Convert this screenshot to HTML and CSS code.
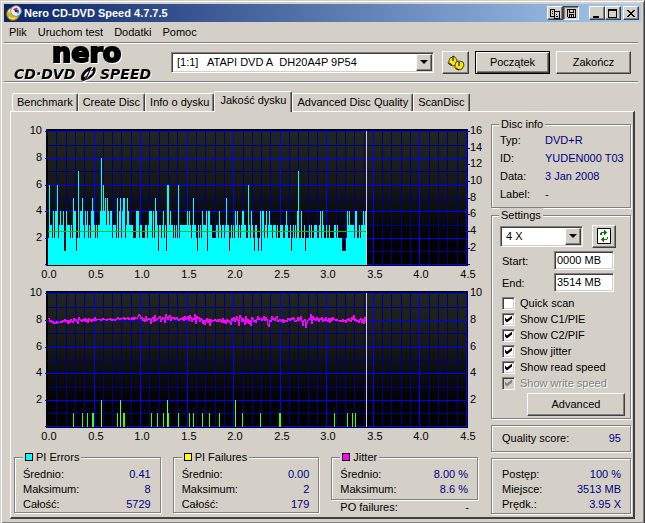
FILE: index.html
```html
<!DOCTYPE html>
<html lang="pl">
<head>
<meta charset="utf-8">
<title>Nero CD-DVD Speed 4.7.7.5</title>
<link rel="stylesheet" href="styles.css">
</head>
<body>
<div class="window">
  <header class="titlebar">
    <svg class="app-icon" viewBox="0 0 16 16" aria-hidden="true">
      <circle cx="7" cy="9" r="6.5" fill="#d8b820" stroke="#7a6410"/>
      <path d="M2 7a6 6 0 0 1 4-4l1 5z" fill="#fff6a0"/>
      <circle cx="10" cy="6" r="5.3" fill="#e8eef4" stroke="#8090a0"/>
      <path d="M7 5a4 4 0 0 1 5-2l-2 3z" fill="#e03020"/>
      <path d="M12 4a4 4 0 0 1 0 5l-2-3z" fill="#2060d0"/>
      <circle cx="10" cy="6" r="1.3" fill="#203040"/>
      <path d="M3 12a5 5 0 0 0 6 1" fill="none" stroke="#fff6a0"/>
    </svg>
    <h1 class="title">Nero CD-DVD Speed 4.7.7.5</h1>
    <div class="caption-group">
      <button class="caption" aria-label="Kopiuj"><svg viewBox="0 0 12 11"><path d="M1 1h5v2h4l1 1v7h-6v-2h-4zM2 2v6h3v-6zM6 4v6h4v-6z" fill-rule="evenodd"/><path d="M3 3h1v1h-1zM3 5h1v1h-1zM7 6h1v1h-1zM7 8h2v1h-2z"/></svg></button>
      <button class="caption pressed" aria-label="Zapisz"><svg viewBox="0 0 12 11"><path d="M2 1h9v9h-8l-1-1zM3 2v7h1v-3h5v3h1v-7h-1v3h-5v-3zM5 2v2h3v-2zM5 7v2h1v-2zM7 7v2h1v-2z" fill-rule="evenodd"/></svg></button>
    </div>
    <div class="caption-group">
      <button class="caption" aria-label="Minimalizuj"><svg viewBox="0 0 12 11"><path d="M2 8h6v2h-6z"/></svg></button>
      <button class="caption" aria-label="Maksymalizuj"><svg viewBox="0 0 12 11"><path d="M1 1h9v9h-9zM2 3v6h7v-6z" fill-rule="evenodd"/></svg></button>
    </div>
    <button class="caption close" aria-label="Zamknij"><svg viewBox="0 0 12 11"><path d="M2 2h2v1h1v1h2v-1h1v-1h2v1h-1v1h-1v1h-1v1h1v1h1v1h1v1h-2v-1h-1v-1h-2v1h-1v1h-2v-1h1v-1h1v-1h1v-1h-1v-1h-1v-1h-1z"/></svg></button>
  </header>

  <nav class="menu">
    <a href="#plik">Plik</a><a href="#test">Uruchom test</a><a href="#dodatki">Dodatki</a><a href="#pomoc">Pomoc</a>
  </nav>

  <div class="toolbar">
    <svg class="logo" viewBox="0 0 148 36" role="img" aria-label="nero CD-DVD SPEED">
      <text class="logo-nero" x="38" y="17">nero</text>
      <text class="logo-sub" x="0" y="34">CD·DVD</text>
      <text class="logo-sub" x="86" y="34">SPEED</text>
      <path d="M67 34c-1-5 5-12 11-12l-3 4c-3 1-5 4-5 6l2-1-2 5c-2 0-3-1-3-2zM80 22c4 1 1 11-8 13l3-4c2-1 4-3 4-5h-2zM78 22l-6 13-2 1 7-14z"/>
    </svg>
    <div class="combo drive">
      <select aria-label="Napęd"><option>[1:1]&nbsp;&nbsp; ATAPI DVD A&nbsp; DH20A4P 9P54</option></select>
      <span class="arrow"></span>
    </div>
    <button class="btn icon-btn" aria-label="Opcje">
      <svg viewBox="0 0 18 16" width="18" height="16">
        <path d="M2 6l1-3 3-1v-1l2 1 2 3-1 5-3 1-3-1-2-2z" fill="#f8e800" stroke="#504800"/>
        <path d="M8 10l1-3 3-1 4 1 1 3-2 4-4 1-3-2z" fill="#f8e800" stroke="#504800"/>
        <path d="M5 2h2v5h-2zM11 6h2v5h-2z" fill="#d4d0c8"/><path d="M6 1v5M12 6v5M2 8l3 2M9 13l3 2" stroke="#000"/>
      </svg>
    </button>
    <button class="btn wide default">Początek</button>
    <button class="btn wide">Zakończ</button>
  </div>

  <div class="tabs" role="tablist">
    <button class="tab" role="tab">Benchmark</button>
    <button class="tab" role="tab">Create Disc</button>
    <button class="tab" role="tab">Info o dysku</button>
    <button class="tab active" role="tab" aria-selected="true">Jakość dysku</button>
    <button class="tab" role="tab">Advanced Disc Quality</button>
    <button class="tab" role="tab">ScanDisc</button>
  </div>

  <main class="panel">
    <section class="results">
      <div class="charts">
        <svg class="chart" id="errors" viewBox="14 0 472 162" role="img" aria-label="PI Errors"></svg>
        <svg class="chart" id="jitter" viewBox="14 0 472 162" role="img" aria-label="PI Failures, Jitter"></svg>
      </div>
      <div class="stats">
        <fieldset class="group">
          <legend><i class="swatch cyan"></i>PI Errors</legend>
          <dl class="rows"><div><dt>Średnio:</dt><dd>0.41</dd></div><div><dt>Maksimum:</dt><dd>8</dd></div><div><dt>Całość:</dt><dd>5729</dd></div></dl>
        </fieldset>
        <fieldset class="group">
          <legend><i class="swatch yellow"></i>PI Failures</legend>
          <dl class="rows"><div><dt>Średnio:</dt><dd>0.00</dd></div><div><dt>Maksimum:</dt><dd>2</dd></div><div><dt>Całość:</dt><dd>179</dd></div></dl>
        </fieldset>
        <div class="jitter-stats">
          <fieldset class="group">
            <legend><i class="swatch magenta"></i>Jitter</legend>
            <dl class="rows"><div><dt>Średnio:</dt><dd>8.00 %</dd></div><div><dt>Maksimum:</dt><dd>8.6 %</dd></div></dl>
          </fieldset>
          <dl class="rows po"><div><dt>PO failures:</dt><dd>-</dd></div></dl>
        </div>
      </div>
    </section>

    <aside class="side">
      <fieldset class="group info">
        <legend>Disc info</legend>
        <dl class="info-rows"><dt>Typ:</dt><dd>DVD+R</dd><dt>ID:</dt><dd>YUDEN000 T03</dd><dt>Data:</dt><dd>3 Jan 2008</dd><dt>Label:</dt><dd>-</dd></dl>
      </fieldset>
      <fieldset class="group settings">
        <legend>Settings</legend>
        <div class="speed-row">
          <div class="combo speed"><select aria-label="Speed"><option>4 X</option></select><span class="arrow"></span></div>
          <button class="btn refresh" aria-label="Refresh">
            <svg viewBox="0 0 14 16" width="14" height="16"><path d="M.5.5h13v15h-13z" fill="#fff" stroke="#000"/><path d="M3 5h1v-1h3v-2h1v1h1v1h1v1h-1v1h-1v1h-1v-2h-2v2h-2zM11 9h-1v2h-3v-2h-1v1h-1v1h-1v1h1v1h1v1h1v-2h3v-1h1z" fill="#008000"/></svg>
          </button>
        </div>
        <div class="field"><label for="start">Start:</label><input id="start" type="text" value="0000 MB"></div>
        <div class="field"><label for="end">End:</label><input id="end" type="text" value="3514 MB"></div>
        <div class="checks">
          <label><input type="checkbox">Quick scan</label>
          <label><input type="checkbox" checked>Show C1/PIE</label>
          <label><input type="checkbox" checked>Show C2/PIF</label>
          <label><input type="checkbox" checked>Show jitter</label>
          <label><input type="checkbox" checked>Show read speed</label>
          <label class="off"><input type="checkbox" checked disabled>Show write speed</label>
        </div>
        <button class="btn advanced">Advanced</button>
      </fieldset>
      <div class="group score"><dl class="rows"><div><dt>Quality score:</dt><dd>95</dd></div></dl></div>
      <div class="group progress"><dl class="rows"><div><dt>Postęp:</dt><dd>100 %</dd></div><div><dt>Miejsce:</dt><dd>3513 MB</dd></div><div><dt>Prędk.:</dt><dd>3.95 X</dd></div></dl></div>
    </aside>
  </main>
</div>
<script src="charts.js"></script>
</body>
</html>
```

FILE: styles.css
```css
:root {
  --face: #d4d0c8;
  --shadow: #808080;
  --dark: #404040;
  --value: #000080;
}

* { box-sizing: border-box; }

body {
  margin: 0;
  background: var(--face);
  font: 11px/15px "Liberation Sans", Arial, sans-serif;
  color: #000;
}

button, select, input { font: inherit; color: inherit; border-radius: 0; }
button { padding: 0; }
dl, dt, dd { margin: 0; }

.window {
  display: flex;
  flex-direction: column;
  min-height: 100vh;
  padding: 3px;
  background: var(--face);
  border: 1px solid;
  border-color: var(--face) var(--dark) var(--dark) var(--face);
  box-shadow: inset 1px 1px #fff, inset -1px -1px var(--shadow);
}

.titlebar {
  display: flex;
  align-items: center;
  height: 18px;
  padding: 0 2px;
  background: linear-gradient(90deg, #0a246a, #a6caf0);
}
.app-icon { width: 16px; height: 16px; margin-right: 2px; }
.title { flex: 1; margin: 0; color: #fff; font-size: 11px; line-height: 18px; font-weight: bold; }
.caption-group { display: flex; margin-right: 10px; }
.caption-group + .caption-group { margin-right: 2px; }
.caption {
  width: 16px;
  height: 14px;
  background: var(--face);
  border: 1px solid;
  border-color: #fff var(--dark) var(--dark) #fff;
  box-shadow: inset -1px -1px var(--shadow);
}
.caption svg { display: block; width: 12px; height: 11px; margin: 0 1px; shape-rendering: crispEdges; }
.pressed { border-color: var(--dark) #fff #fff var(--dark); box-shadow: inset 1px 1px var(--shadow); }

.menu { display: flex; gap: 11px; height: 20px; padding: 0 5px; line-height: 20px; }
.menu a { color: inherit; text-decoration: none; }

.toolbar {
  display: flex;
  align-items: center;
  height: 41px;
  margin: 0 3px 0 0;
  padding: 0 7px 0 10px;
  border-top: 1px solid var(--shadow);
  border-bottom: 1px solid #fff;
  box-shadow: inset 0 1px #fff, inset 0 -1px var(--shadow);
}
.logo { width: 148px; height: 36px; margin-right: 9px; overflow: visible; flex: none; filter: drop-shadow(1px 1px 0 #fff); }
.logo-nero { font: bold 27px "DejaVu Sans", sans-serif; stroke: #000; stroke-width: 2px; }
.logo-sub { font: italic bold 14px "DejaVu Sans", sans-serif; }

.combo {
  position: relative;
  height: 21px;
  background: #fff;
  border: 1px solid;
  border-color: var(--shadow) #fff #fff var(--shadow);
  box-shadow: inset 1px 1px var(--dark), inset -1px -1px var(--face);
}
.combo select {
  display: block;
  width: 100%;
  height: 19px;
  padding: 0 18px 0 5px;
  border: 0;
  background: transparent;
  appearance: none;
}
.drive { flex: 1; margin-right: 8px; }
.arrow {
  position: absolute;
  top: 1px;
  right: 1px;
  bottom: 1px;
  width: 16px;
  background: var(--face);
  border: 1px solid;
  border-color: #fff var(--dark) var(--dark) #fff;
  box-shadow: inset -1px -1px var(--shadow);
  pointer-events: none;
}
.arrow::after {
  content: "";
  display: block;
  margin: 5px 3px;
  border: 4px solid transparent;
  border-top-color: #000;
  border-bottom: 0;
}

.btn {
  height: 23px;
  background: var(--face);
  border: 1px solid;
  border-color: #fff var(--dark) var(--dark) #fff;
  box-shadow: inset -1px -1px var(--shadow);
}
.btn svg { display: block; margin: auto; }
.icon-btn { width: 27px; margin-right: 6px; }
.wide { width: 75px; }
.default { margin-right: 6px; border-color: #000; box-shadow: inset 1px 1px #fff, inset -1px -1px var(--dark), inset -2px -2px var(--shadow); }

.tabs { display: flex; align-items: flex-end; height: 28px; padding: 0 8px; }
.tab {
  height: 18px;
  padding: 0 4px;
  background: var(--face);
  border: 1px solid;
  border-color: #fff var(--dark) transparent #fff;
  border-bottom: 0;
  border-radius: 2px 2px 0 0;
  box-shadow: inset -1px 0 var(--shadow);
}
.active { position: relative; height: 21px; margin-bottom: -1px; padding: 0 5px 3px; }

.panel {
  display: flex;
  flex: 1;
  gap: 5px;
  margin: 0 6px 1px;
  padding: 5px 2px 2px 3px;
  border: 1px solid #fff;
  border-right: 2px solid var(--dark);
  border-bottom: 2px solid var(--dark);
}
.results { flex: 1; min-width: 0; }
.charts { padding-top: 3px; }
.chart { display: block; width: 100%; height: auto; font-size: 11px; shape-rendering: crispEdges; }

.group {
  min-width: 0;
  margin: 0;
  padding: 0 8px;
  border: 1px solid var(--shadow);
  box-shadow: inset 1px 1px #fff, 1px 1px #fff;
}
.group legend { height: 14px; padding: 0 2px; line-height: 14px; background: var(--face); }
.swatch { display: inline-block; width: 8px; height: 8px; margin-right: 3px; border: 1px solid #000; }
.cyan { background: #0ff; }
.yellow { background: #ff0; }
.magenta { background: #f0f; }
.rows > div { display: flex; justify-content: space-between; height: 15px; }
dd { color: var(--value); }

.stats { display: grid; grid-template-columns: repeat(3, 1fr); gap: 12px; align-items: start; padding: 6px 8px 0 0; }
.stats .group { padding: 3px 9px 0 8px; }
.stats legend { display: flex; align-items: center; }
.jitter-stats .rows { padding-bottom: 2px; }
.rows.po { padding: 0 9px; }

.side { width: 140px; }
.info { padding-bottom: 4px; }
.info-rows { display: grid; grid-template-columns: 45px 1fr; line-height: 18px; white-space: nowrap; }
.info legend, .settings legend { margin-left: -1px; }
.settings { padding: 2px 5px 2px 8px; }
.speed-row { display: flex; gap: 9px; align-items: center; height: 24px; margin-bottom: 3px; }
.speed { width: 83px; }
.refresh { width: 24px; }
.field { display: flex; justify-content: space-between; height: 19px; margin: 0 11px 3px 2px; line-height: 21px; }
.field input {
  width: 60px;
  height: 19px;
  padding: 0 2px;
  background: #fff;
  border: 1px solid;
  border-color: var(--shadow) #fff #fff var(--shadow);
  box-shadow: inset 1px 1px var(--dark), inset -1px -1px var(--face);
}
.checks { padding: 0 0 2px 2px; }
.checks label { display: flex; align-items: center; gap: 5px; height: 16px; }
.checks input {
  width: 13px;
  height: 13px;
  margin: 0;
  appearance: none;
  background: #fff;
  border: 1px solid;
  border-color: var(--shadow) #fff #fff var(--shadow);
  box-shadow: inset 1px 1px var(--dark), inset -1px -1px var(--face);
}
.checks input:checked::after {
  content: "";
  display: block;
  width: 7px;
  height: 7px;
  margin: 2px;
  background: #000;
  clip-path: polygon(0 29%, 29% 57%, 100% 0, 100% 42%, 29% 100%, 0 71%);
}
.checks input:disabled { background: var(--face); }
.checks input:disabled::after { background: var(--shadow); }
.off { color: var(--shadow); text-shadow: 1px 1px #fff; }
.advanced { display: block; width: 98px; margin-left: auto; }
.score { margin-top: 6px; padding: 5px 9px 5px 10px; }
.progress { margin-top: 6px; padding: 8px 9px 1px 10px; }
```

FILE: charts.js
```js
const LEFT = 48;
const MAJOR_X = [47, 94, 140, 187, 233, 280, 326, 373, 419, 466];
const MAJOR_Y = [11, 38, 65, 91, 118, 144];
const MINOR_Y = [25, 51, 78, 105, 131];
const LEVEL_Y = [144, 131, 118, 105, 91, 78, 65, 51, 38];

// PI error count for each sampled column
const errors =
  "263324244623433411433323254412724453243423245432323" +
  "348464535434423332524524552354333322244423322233234" +
  "442425431332342316634332323262333333343432353321323" +
  "243334144332222332432332353312323243423234433226324" +
  "321332124144234234332333232233322343223123232472242" +
  "231222323223332234243223223222233232222111124343333" +
  "2442232334342";

// Jitter trace, as hexadecimal pixel offsets from the top of its band
const jitter =
  "58798a9a89998978687a796895768a" +
  "467867586957686747666676566676" +
  "656766765456555465546556464553" +
  "125476837656a54827654386459146" +
  "327454654676564736537248561a35" +
  "4856a7b7596c687767868679597a68" +
  "79b5748637c24857b396a7c4587963" +
  "655763746bd7836574387678697785" +
  "67564588747638c76e97651a365746" +
  "856486747859574667677878687967" +
  "578462768796596a4896b5d73";

// Failures: [column, count]
const failures = [
  [73, 1], [82, 1], [87, 1], [92, 1], [93, 1], [101, 2], [117, 1], [120, 2],
  [123, 1], [124, 1], [151, 1], [157, 1], [163, 1], [167, 2], [168, 1],
  [178, 1], [189, 1], [193, 1], [202, 1], [209, 1], [219, 1], [235, 2],
  [242, 1], [260, 1], [279, 1], [280, 1], [334, 1], [347, 1], [352, 1], [355, 1]
];

const rect = (x, y, w, h, fill) =>
  `<rect x="${x}" y="${y}" width="${w}" height="${h}" fill="${fill}"/>`;
const text = (x, y, value, anchor) =>
  `<text x="${x}" y="${y}" text-anchor="${anchor}">${value}</text>`;

function frame(id) {
  let out = `<defs><linearGradient id="${id}-bg" x2="0" y2="1">
    <stop offset="0" stop-color="#222622"/><stop offset=".4" stop-color="#151815"/>
    <stop offset=".8" stop-color="#030303"/><stop offset="1" stop-color="#000"/>
    </linearGradient></defs>`;
  out += rect(46, 9, 422, 137, "#000") + rect(48, 12, 418, 132, `url(#${id}-bg)`);
  for (let i = 0; i < 45; i++) {
    if (i % 5) out += rect(Math.round(47 + i * 9.31), 11, 1, 134, "#000080");
  }
  MINOR_Y.forEach(y => { out += rect(47, y, 419, 1, "#000080"); });
  MAJOR_X.forEach((x, i) => {
    if (i) out += rect(x, 11, 1, 134, "#00f");
    out += text(x + 2, 158, (i / 2).toFixed(1), "middle");
  });
  MAJOR_Y.forEach((y, i) => {
    out += rect(45, y, 421, 1, "#00f");
    if (i < 5) out += text(42, y + 3, 10 - i * 2, "end");
  });
  return out;
}

function drawErrors() {
  let out = frame("errors");
  [...errors].slice(0, 319).forEach((n, i) => {
    const y = LEVEL_Y[n];
    out += rect(LEFT + i, y, 1, 145 - y, "#0ff");
  });
  out += rect(48, 111, 318, 1, "#00c020") + rect(366, 11, 1, 134, "#d4d0c8");
  for (let i = 0; i <= 16; i++) {
    const y = Math.round(11 + i * 8.33);
    out += rect(467, y, i % 2 ? 1 : 3, 1, "#00f");
    if (i % 2 === 0 && i < 16) out += text(470, y + 3, 16 - i, "start");
  }
  document.getElementById("errors").innerHTML = out;
}

function drawJitter() {
  let out = frame("jitter");
  failures.forEach(([x, n]) => {
    out += rect(x, LEVEL_Y[n], 1, 145 - LEVEL_Y[n], n > 1 ? "#80ff00" : "#40ff00");
  });
  let last = parseInt(jitter[0], 16);
  [...jitter].slice(0, 318).forEach((c, i) => {
    const v = parseInt(c, 16);
    out += rect(LEFT + i, 31 + Math.min(v, last), 1, Math.abs(v - last) + 1, "#f0f");
    last = v;
  });
  out += rect(366, 11, 1, 134, "#d4d0c8");
  MAJOR_Y.slice(0, 5).forEach((y, i) => { out += text(470, y + 3, 10 - i * 2, "start"); });
  document.getElementById("jitter").innerHTML = out;
}

drawErrors();
drawJitter();
```
